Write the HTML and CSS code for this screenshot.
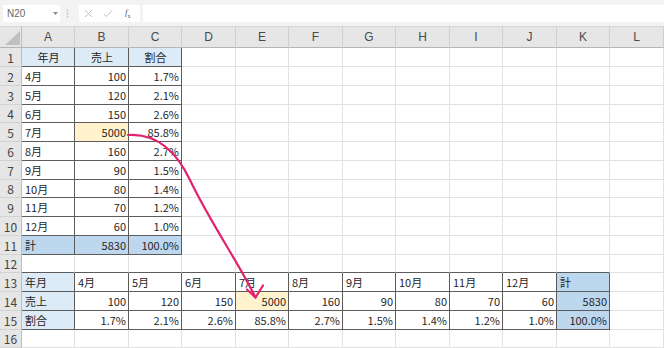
FILE: index.html
```html
<!DOCTYPE html>
<html lang="ja">
<head>
<meta charset="utf-8">
<title>Sheet</title>
<link rel="stylesheet" href="styles.css">
</head>
<body>
<div class="bar">
  <div class="name"><span>N20</span><svg class="caret" width="5" height="3" viewBox="0 0 5 3"><path d="M0 0H5L2.5 3Z"/></svg></div>
  <svg class="grip" width="3" height="9" viewBox="0 0 3 9"><circle cx="1.5" cy="1.5" r="0.9"/><circle cx="1.5" cy="4.5" r="0.9"/><circle cx="1.5" cy="7.5" r="0.9"/></svg>
  <div class="fxbox">
    <svg class="ico" width="9" height="9" viewBox="0 0 9 9"><path d="M1 1L8 8M8 1L1 8"/></svg>
    <svg class="ico" width="10" height="9" viewBox="0 0 10 9"><path d="M1 5L3.5 7.5L9 1.5"/></svg>
    <span class="fx"><i>f</i><sub>x</sub></span>
  </div>
  <div class="formula"></div>
</div>

<div class="sheet">
  <div class="corner"><span class="tri"></span></div>
  <div class="ch">A</div><div class="ch">B</div><div class="ch">C</div><div class="ch">D</div><div class="ch">E</div><div class="ch">F</div><div class="ch">G</div><div class="ch">H</div><div class="ch">I</div><div class="ch">J</div><div class="ch">K</div><div class="ch">L</div>

  <div class="rh">1</div>
  <div class="t hd">年月</div><div class="t hd">売上</div><div class="t hd">割合</div>
  <div></div><div></div><div></div><div></div><div></div><div></div><div></div><div></div><div></div>

  <div class="rh">2</div>
  <div class="t">4月</div><div class="t r">100</div><div class="t r">1.7%</div>
  <div></div><div></div><div></div><div></div><div></div><div></div><div></div><div></div><div></div>

  <div class="rh">3</div>
  <div class="t">5月</div><div class="t r">120</div><div class="t r">2.1%</div>
  <div></div><div></div><div></div><div></div><div></div><div></div><div></div><div></div><div></div>

  <div class="rh">4</div>
  <div class="t">6月</div><div class="t r">150</div><div class="t r">2.6%</div>
  <div></div><div></div><div></div><div></div><div></div><div></div><div></div><div></div><div></div>

  <div class="rh">5</div>
  <div class="t">7月</div><div class="t r hl">5000</div><div class="t r">85.8%</div>
  <div></div><div></div><div></div><div></div><div></div><div></div><div></div><div></div><div></div>

  <div class="rh">6</div>
  <div class="t">8月</div><div class="t r">160</div><div class="t r">2.7%</div>
  <div></div><div></div><div></div><div></div><div></div><div></div><div></div><div></div><div></div>

  <div class="rh">7</div>
  <div class="t">9月</div><div class="t r">90</div><div class="t r">1.5%</div>
  <div></div><div></div><div></div><div></div><div></div><div></div><div></div><div></div><div></div>

  <div class="rh">8</div>
  <div class="t">10月</div><div class="t r">80</div><div class="t r">1.4%</div>
  <div></div><div></div><div></div><div></div><div></div><div></div><div></div><div></div><div></div>

  <div class="rh">9</div>
  <div class="t">11月</div><div class="t r">70</div><div class="t r">1.2%</div>
  <div></div><div></div><div></div><div></div><div></div><div></div><div></div><div></div><div></div>

  <div class="rh">10</div>
  <div class="t">12月</div><div class="t r">60</div><div class="t r">1.0%</div>
  <div></div><div></div><div></div><div></div><div></div><div></div><div></div><div></div><div></div>

  <div class="rh">11</div>
  <div class="t tot">計</div><div class="t r tot">5830</div><div class="t r tot">100.0%</div>
  <div></div><div></div><div></div><div></div><div></div><div></div><div></div><div></div><div></div>

  <div class="rh">12</div>
  <div class="tb"></div><div class="tb"></div><div class="tb"></div><div class="tb"></div><div class="tb"></div><div class="tb"></div><div class="tb"></div><div class="tb"></div><div class="tb"></div><div class="tb"></div><div class="tb"></div>
  <div></div>

  <div class="rh">13</div>
  <div class="t lb">年月</div>
  <div class="t">4月</div><div class="t">5月</div><div class="t">6月</div><div class="t">7月</div><div class="t">8月</div><div class="t">9月</div><div class="t">10月</div><div class="t">11月</div><div class="t">12月</div>
  <div class="t tot">計</div>
  <div></div>

  <div class="rh">14</div>
  <div class="t lb">売上</div>
  <div class="t r">100</div><div class="t r">120</div><div class="t r">150</div><div class="t r hl">5000</div><div class="t r">160</div><div class="t r">90</div><div class="t r">80</div><div class="t r">70</div><div class="t r">60</div>
  <div class="t r tot">5830</div>
  <div></div>

  <div class="rh">15</div>
  <div class="t lb">割合</div>
  <div class="t r">1.7%</div><div class="t r">2.1%</div><div class="t r">2.6%</div><div class="t r">85.8%</div><div class="t r">2.7%</div><div class="t r">1.5%</div><div class="t r">1.4%</div><div class="t r">1.2%</div><div class="t r">1.0%</div>
  <div class="t r tot">100.0%</div>
  <div></div>

  <div class="rh">16</div>
  <div></div><div></div><div></div><div></div><div></div><div></div><div></div><div></div><div></div><div></div><div></div><div></div>
</div>

<svg class="arrow" width="664" height="348" viewBox="0 0 664 348">
  <path d="M128 135C160 133 178 155 190 180C210 222 240 265 255.5 297.5"/>
  <path d="M247 289.5L255.5 297.5L263 285.5"/>
</svg>
</body>
</html>
```

FILE: styles.css
```css
html, body {
  margin: 0;
  padding: 0;
}

body {
  width: 664px;
  height: 348px;
  overflow: hidden;
  position: relative;
  background: #ffffff;
  font-family: "Noto Sans CJK JP", "Noto Sans", sans-serif;
  color: #262626;
}

/* formula bar */
.bar {
  height: 26px;
  background: #f3f3f3;
  border-bottom: 1px solid #d6d6d6;
  display: flex;
  align-items: center;
  padding-left: 3px;
  box-sizing: content-box;
}

.name {
  width: 57px;
  height: 17px;
  box-sizing: border-box;
  background: #ffffff;
  display: flex;
  align-items: center;
  justify-content: space-between;
  padding: 0 2px 0 4px;
  font: 10px "Liberation Sans", Arial, sans-serif;
  color: #666666;
}

.caret {
  fill: #8a8a8a;
}

.grip {
  margin: 0 10px 0 6px;
  fill: #c4c4c4;
}

.fxbox {
  width: 61px;
  height: 17px;
  background: #ffffff;
  display: flex;
  align-items: center;
  gap: 0;
  padding-left: 5px;
  box-sizing: border-box;
}

.ico {
  fill: none;
  stroke: #c2c2c2;
  stroke-width: 1;
  margin-right: 10px;
}

.fx {
  font: 9px "Liberation Serif", serif;
  color: #555555;
  margin-left: 2px;
}

.fx sub {
  font-size: 6px;
}

.formula {
  flex: 1;
  height: 17px;
  margin-left: 3px;
  background: #ffffff;
}

/* sheet grid */
.sheet {
  display: grid;
  grid-template-columns: 22px repeat(6, 53px 54px);
  grid-template-rows: 21px repeat(4, 19px 19px 19px 18px);
}

.sheet > div {
  box-sizing: border-box;
  border-right: 1px solid #e1e1e1;
  border-bottom: 1px solid #e1e1e1;
  display: flex;
  align-items: center;
  padding: 0 2px 0 3px;
  font-size: 11px;
  white-space: nowrap;
  overflow: hidden;
}

.sheet > .corner {
  background: #e6e6e6;
  border-right: 1px solid #bdbdbd;
  border-bottom: 1px solid #b5b5b5;
  justify-content: flex-end;
  align-items: flex-end;
  padding: 0 1px 2px 0;
}

.tri {
  width: 0;
  height: 0;
  border-left: 15px solid transparent;
  border-bottom: 14px solid #c0c0c0;
}

.sheet > .ch {
  background: #e6e6e6;
  justify-content: center;
  border-right: 1px solid #cfcfcf;
  border-bottom: 1px solid #b5b5b5;
  font-family: "Liberation Sans", Arial, sans-serif;
  font-size: 12px;
  color: #4a4a4a;
  padding: 0;
}

.sheet > .rh {
  background: #e6e6e6;
  justify-content: center;
  border-right: 1px solid #bdbdbd;
  border-bottom: 1px solid #d2d2d2;
  font-size: 12px;
  color: #444444;
  padding: 0;
}

.sheet > .t {
  border-right-color: #5c5c5c;
  border-bottom-color: #5c5c5c;
}

.sheet > .tb {
  border-bottom-color: #5c5c5c;
}

.sheet > .r {
  justify-content: flex-end;
}

.sheet > .hd {
  justify-content: center;
  background: #ddebf7;
}

.lb {
  background: #ddebf7;
}

.tot {
  background: #bdd7ee;
}

.hl {
  background: #fff2cc;
}

/* overlay arrow */
.arrow {
  position: absolute;
  left: 0;
  top: 0;
  fill: none;
  stroke: #e2226e;
  stroke-width: 2.2;
  stroke-linecap: round;
  stroke-linejoin: round;
}
```
